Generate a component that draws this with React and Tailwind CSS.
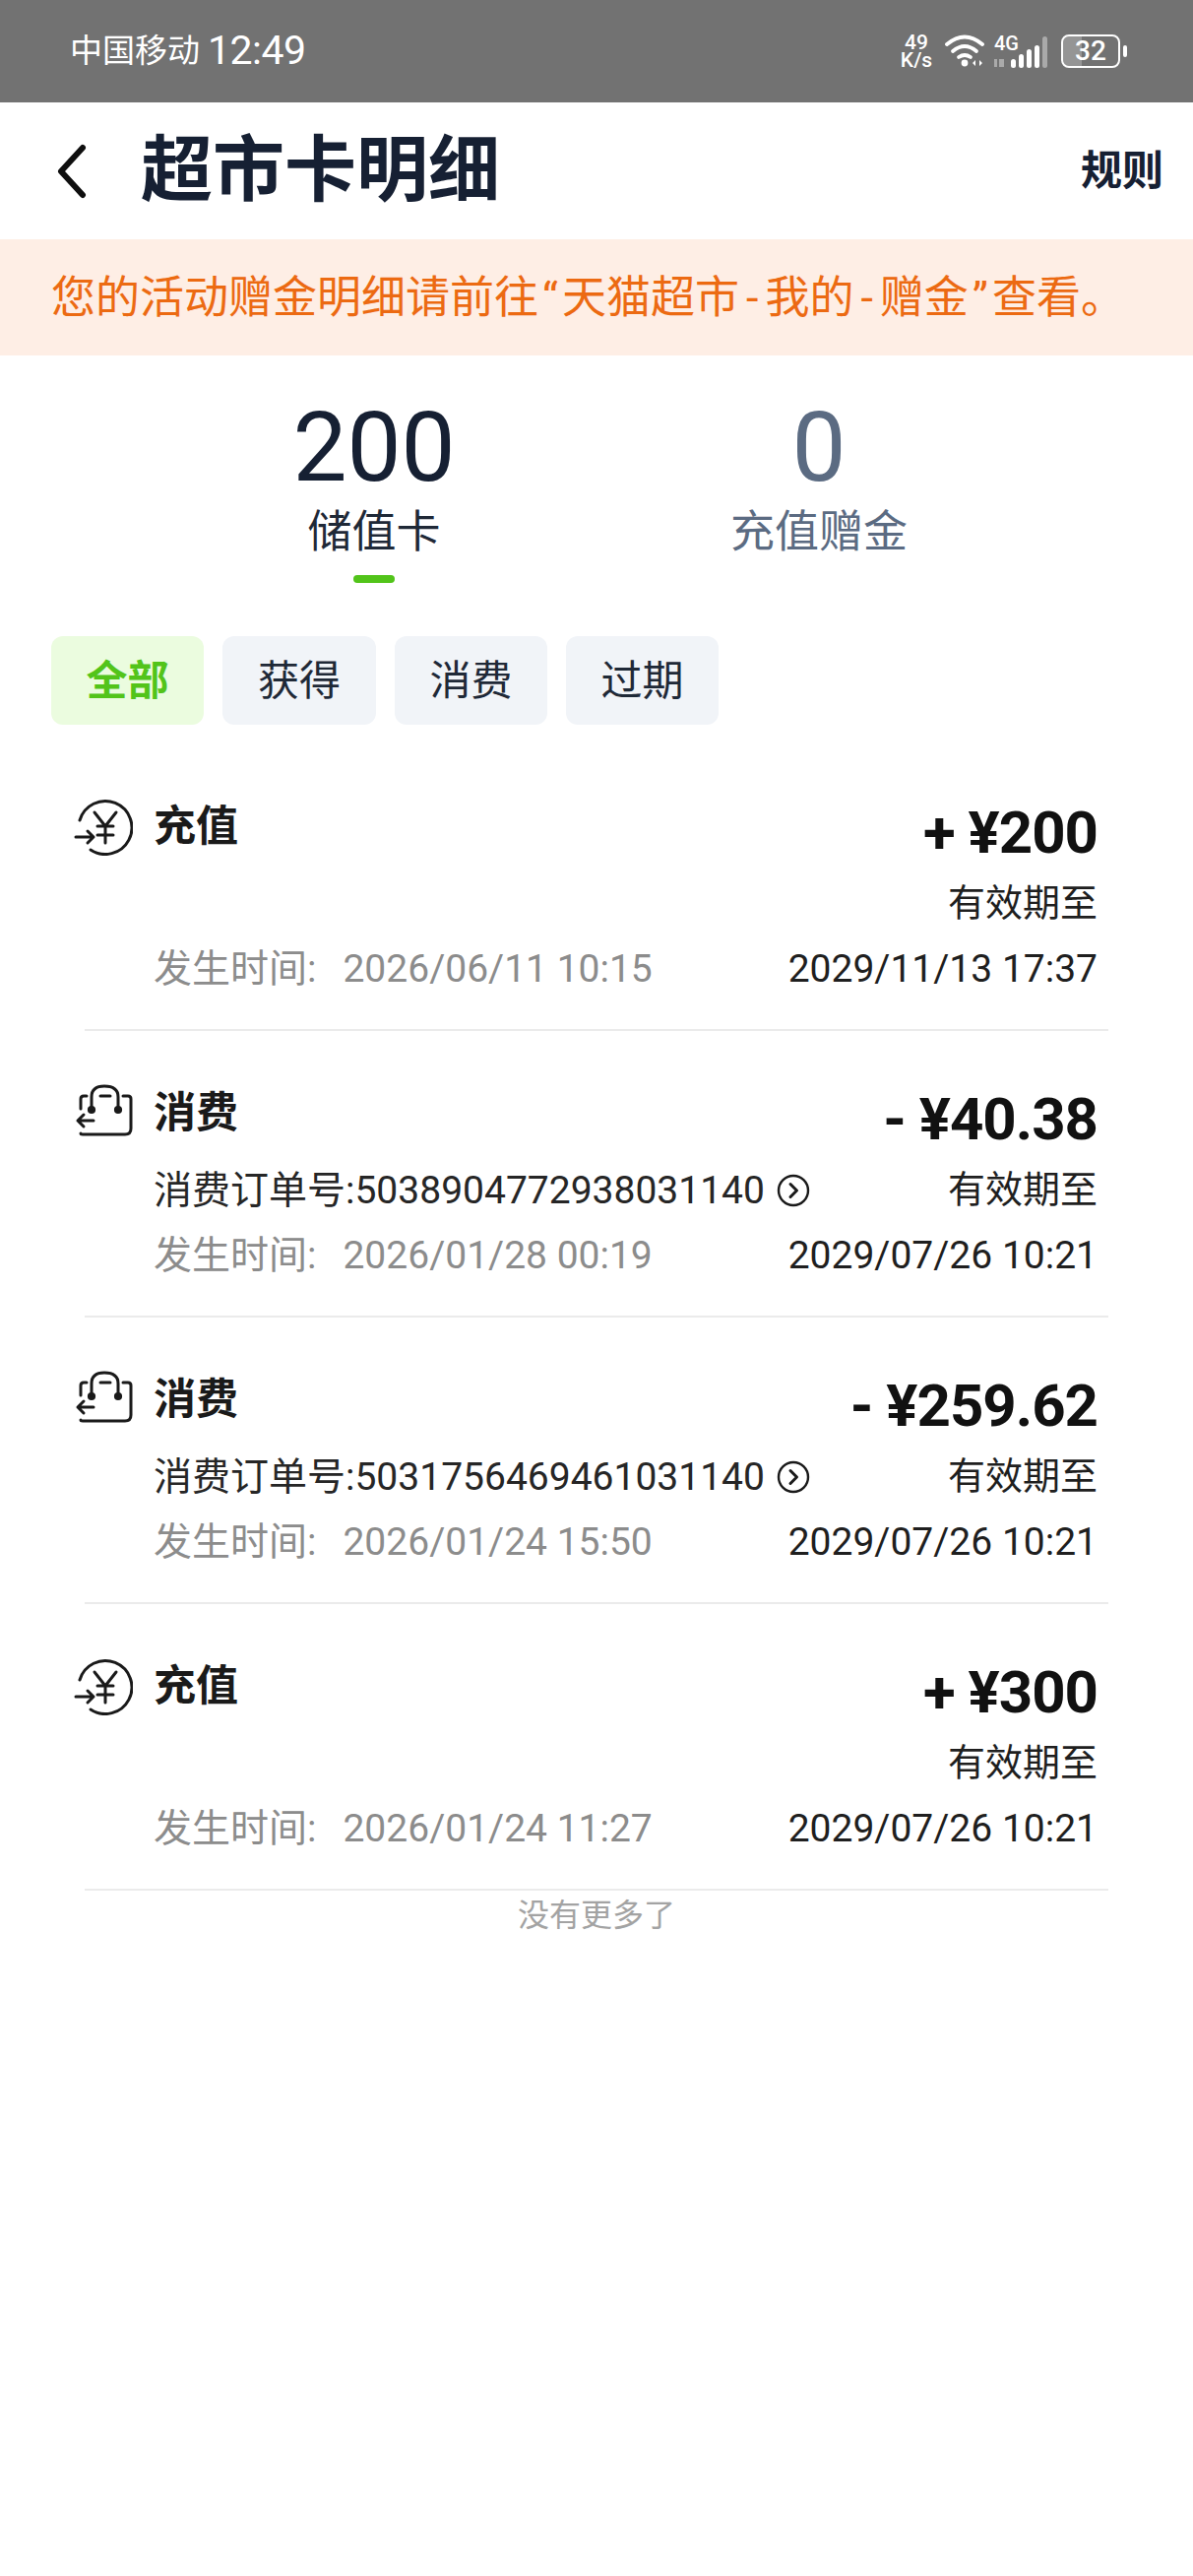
const SANS = "font-['Roboto','Noto_Sans_CJK_SC',sans-serif]";

const ROWS = [
    { icon: 'in', title: '充值', amount: '+ ¥200', time: '2026/06/11 10:15', expire: '2029/11/13 17:37' },
    { icon: 'bag', title: '消费', amount: '- ¥40.38', order: '5038904772938031140', time: '2026/01/28 00:19', expire: '2029/07/26 10:21' },
    { icon: 'bag', title: '消费', amount: '- ¥259.62', order: '5031756469461031140', time: '2026/01/24 15:50', expire: '2029/07/26 10:21' },
    { icon: 'in', title: '充值', amount: '+ ¥300', time: '2026/01/24 11:27', expire: '2029/07/26 10:21' },
];

function RechargeIcon() {
    return (
        <svg width="60" height="60" viewBox="0 0 60 60" fill="none" stroke="#1a1a1a" strokeWidth="3" strokeLinecap="round" strokeLinejoin="round">
            <path d="M6 24A27 27 0 1 1 17 54" />
            <path d="M21 16l11 14 11-14M24 30h16M24 39h16M32 30v17" />
            <path d="M2 41h18M14 35l6 6-6 6" />
        </svg>
    );
}

function BagIcon() {
    return (
        <svg width="60" height="60" viewBox="0 0 60 60" fill="none" stroke="#1a1a1a" strokeWidth="3" strokeLinecap="round" strokeLinejoin="round">
            <path d="M7 26V16q0-3 3-3h3M27 13h10M50 13h5q3 0 3 3v30q0 6-6 6H9q-2 0-2-1" />
            <path d="M18 26V14Q18 3 31 3Q45 3 45 14V26" />
            <circle cx="18" cy="27" r="2.6" fill="#1a1a1a" />
            <circle cx="45" cy="27" r="2.6" fill="#1a1a1a" />
            <path d="M20 38H4M10 32l-6 6 6 6" />
        </svg>
    );
}

function StatusBar() {
    return (
        <div className="h-[104px] bg-[#727272] flex items-center justify-between pl-[71px] pr-[67px] text-white">
            <div className="flex items-center gap-[8px] mb-[2px]">
                <span className="text-[33px] leading-none">中国移动</span>
                <span className="text-[41px] leading-none tracking-[-0.5px] font-['Roboto',sans-serif]">12:49</span>
            </div>
            <div className="flex items-center">
                <div className="text-center font-['Roboto',sans-serif] font-medium text-[21px] leading-[18px] w-[34px]">
                    49<br />K/s
                </div>
                <svg className="ml-[12px]" width="40" height="34" viewBox="0 0 40 34" fill="none" stroke="white" strokeWidth="3.8" strokeLinecap="round">
                    <path d="M2 10Q20-5 38 10" />
                    <path d="M8 17Q20 7 32 17" />
                    <path d="M14 23Q20 19 26 23" />
                    <circle cx="20" cy="29" r="3.4" fill="white" stroke="none" />
                    <path d="M31 26l-3 3 3 3zM35 26l3 3-3 3z" fill="white" stroke="none" />
                </svg>
                <div className="ml-[10px] relative w-[54px] h-[34px]">
                    <span className="absolute left-0 top-0 font-['Roboto',sans-serif] font-medium text-[20px] leading-[18px]">4G</span>
                    <div className="absolute left-0 bottom-[1px] flex gap-[2px]">
                        <div className="w-[3px] h-[8px] bg-white/40" />
                        <div className="w-[5px] h-[8px] bg-white/40" />
                    </div>
                    <div className="absolute left-[17px] bottom-0 flex items-end gap-[3px]">
                        <div className="w-[5px] h-[9px] rounded-full bg-white" />
                        <div className="w-[5px] h-[14px] rounded-full bg-white" />
                        <div className="w-[5px] h-[19px] rounded-full bg-white" />
                        <div className="w-[5px] h-[23px] rounded-full bg-white" />
                        <div className="w-[5px] h-[32px] rounded-full bg-white/40" />
                    </div>
                </div>
                <div className="ml-[14px] flex items-center">
                    <div className="relative w-[60px] h-[34px] rounded-[8px] border-2 border-white overflow-hidden flex items-center justify-center">
                        <div className="absolute left-0 top-0 bottom-0 w-[19px] bg-white/25" />
                        <span className="relative text-[28px] leading-none font-['Roboto',sans-serif] font-medium">32</span>
                    </div>
                    <div className="ml-[3px] w-[4px] h-[12px] rounded-full bg-white" />
                </div>
            </div>
        </div>
    );
}

function Row({ row }) {
    return (
        <div>
            <div className="flex justify-between pl-[75px] pr-[97px] h-[289px]">
                <div className="flex flex-col min-w-0 flex-1 whitespace-nowrap">
                    <div className="flex items-center h-[60px] mt-[53px] gap-[21px]">
                        {row.icon === 'in' ? <RechargeIcon /> : <BagIcon />}
                        <span className="text-[43px] font-bold text-[#1a1a1a] leading-none">{row.title}</span>
                    </div>
                    <div className="ml-[81px] h-[40px] mt-[29px] flex items-center text-[39px] leading-none text-[#262626]">
                        {row.order && (
                            <>
                                <span>消费订单号:{row.order}</span>
                                <svg className="ml-[12px] shrink-0" width="34" height="34" viewBox="0 0 34 34" fill="none" stroke="#1a1a1a" strokeWidth="2.4" strokeLinecap="round" strokeLinejoin="round">
                                    <circle cx="17" cy="17" r="15" />
                                    <path d="M14 10.5l6.5 6.5-6.5 6.5" strokeWidth="3" />
                                </svg>
                            </>
                        )}
                    </div>
                    <div className="ml-[81px] mt-[26px] flex text-[39px] leading-[40px] text-[#8c8c8c]">
                        <span>发生时间:</span>
                        <span className="ml-[27px]">{row.time}</span>
                    </div>
                </div>
                <div className="flex flex-col items-end shrink-0 whitespace-nowrap">
                    <div className="mt-[60px] text-[60px] leading-[60px] font-bold text-[#111] font-['Roboto',sans-serif] tracking-[-1px]">{row.amount}</div>
                    <div className="mt-[21px] text-[38px] leading-[40px] text-[#1f1f1f]">有效期至</div>
                    <div className="mt-[27px] text-[39px] leading-[40px] text-[#1f1f1f]">{row.expire}</div>
                </div>
            </div>
            <div className="mx-[86px] h-[2px] bg-[#ebebeb]" />
        </div>
    );
}

export default function App() {
    return (
        <div className={`w-[1212px] h-[2616px] bg-white overflow-hidden ${SANS}`}>
            <StatusBar />

            {/* title */}
            <div className="h-[139px] flex items-center justify-between pl-[58px] pr-[30px]">
                <div className="flex items-center">
                    <svg width="30" height="56" viewBox="0 0 30 56" fill="none" stroke="#0f0f0f" strokeWidth="6" strokeLinecap="round" strokeLinejoin="round">
                        <path d="M26 4L4 28l22 24" />
                    </svg>
                    <span className="ml-[55px] text-[73px] font-bold leading-none text-[#162033]">超市卡明细</span>
                </div>
                <span className="text-[42px] font-bold leading-none text-[#162033]">规则</span>
            </div>

            {/* notice */}
            <div className="h-[118px] bg-[#feeee5] flex items-center pl-[52px] text-[45px] leading-none text-[#ec6a12] whitespace-nowrap">
                <span>
                    您的活动赠金明细请前往<span className="mx-[4px]">“</span>天猫超市<span className="mx-[7px]">-</span>我的<span className="mx-[7px]">-</span>赠金<span className="mx-[4px]">”</span>查看。
                </span>
            </div>

            {/* balances */}
            <div className="flex h-[285px]">
                <div className="w-[760px] flex flex-col items-center">
                    <div className="mt-[44px] text-[98px] leading-[100px] text-[#162033]">200</div>
                    <div className="mt-[11px] text-[45px] leading-[50px] text-[#1f2937]">储值卡</div>
                    <div className="mt-[18px] w-[42px] h-[8px] rounded-full bg-[#52c41a]" />
                </div>
                <div className="w-[144px] shrink-0 flex flex-col items-center">
                    <div className="mt-[44px] text-[98px] leading-[100px] text-[#5b6b82]">0</div>
                    <div className="mt-[11px] text-[45px] leading-[50px] text-[#5b6b82] whitespace-nowrap">充值赠金</div>
                </div>
            </div>

            {/* filters */}
            <div className="flex gap-[19px] pl-[52px] mb-[20px]">
                <div className="w-[155px] h-[90px] rounded-[12px] bg-[#ebfcdf] flex items-center justify-center text-[42px] font-bold text-[#52c41a]">全部</div>
                <div className="w-[156px] h-[90px] rounded-[12px] bg-[#f1f4f8] flex items-center justify-center text-[42px] text-[#1f2937]">获得</div>
                <div className="w-[155px] h-[90px] rounded-[12px] bg-[#f1f4f8] flex items-center justify-center text-[42px] text-[#1f2937]">消费</div>
                <div className="w-[155px] h-[90px] rounded-[12px] bg-[#f1f4f8] flex items-center justify-center text-[42px] text-[#1f2937]">过期</div>
            </div>

            {ROWS.map((row) => (
                <Row key={row.time} row={row} />
            ))}

            <div className="mt-[5px] text-center text-[32px] leading-[40px] text-[#a3a3a3]">没有更多了</div>
        </div>
    );
}
